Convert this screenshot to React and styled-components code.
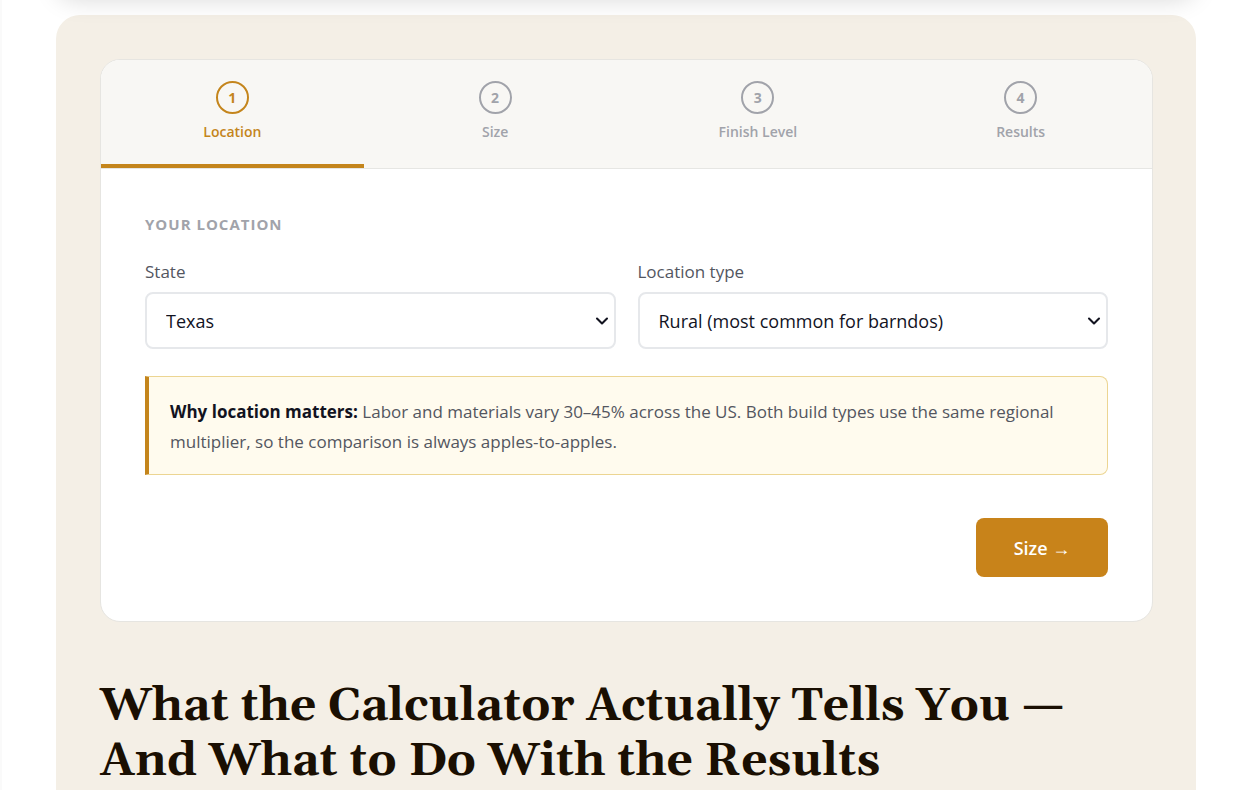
import styled, { createGlobalStyle } from "styled-components";
import { ChevronDown } from "lucide-react";
import { useState } from "react";

const GlobalStyle = createGlobalStyle`
  * {
    box-sizing: border-box;
  }

  body {
    margin: 0;
    font-family: "Segoe UI", "Open Sans", "Noto Sans", sans-serif;
    color: #12131f;
  }
`;

const Page = styled.main`
  height: 100vh;
  padding-left: 1px;
  overflow: hidden auto;
  scrollbar-width: none;
  border-left: 2px solid #fafafa;
  background-color: #fff;
`;

const Banner = styled.div`
  position: relative;
  max-width: 1140px;
  height: 40px;
  margin: -44px auto 19px;
  border-radius: 20px;
  background-color: #fff;
  box-shadow: 0 4px 24px rgba(0, 0, 0, 0.15);
`;

const Panel = styled.section`
  max-width: 1140px;
  margin: 0 auto;
  padding: 44px 43px 44px 44px;
  border-radius: 24px;
  background-color: #f4efe6;
`;

const Card = styled.div`
  overflow: hidden;
  border: 1px solid #e6e5e1;
  border-radius: 20px;
  background-color: #fff;
`;

const Steps = styled.nav`
  display: grid;
  grid-template-columns: repeat(4, 1fr);
  border-bottom: 1px solid #e6e6e3;
  background-color: #f8f7f4;
`;

const Step = styled.button`
  display: flex;
  flex-direction: column;
  align-items: center;
  gap: 8px;
  padding: 21px 8px 22px;
  border: none;
  border-bottom: 4px solid ${(props) => (props.$active ? "#c4851c" : "transparent")};
  background: none;
  color: ${(props) => (props.$active ? "#c4851c" : "#a1a3aa")};
  font-family: inherit;
  font-size: 14px;
  font-weight: 600;
  line-height: 20px;
  cursor: pointer;
`;

const StepNumber = styled.span`
  display: flex;
  align-items: center;
  justify-content: center;
  width: 33px;
  height: 33px;
  border: 2px solid currentColor;
  border-radius: 50%;
  font-weight: 700;
`;

const Form = styled.form`
  padding: 43px 44px 44px;
`;

const FormTitle = styled.h3`
  margin: 0 0 24px;
  color: #a1a3aa;
  font-size: 15px;
  font-weight: 700;
  line-height: 24px;
  letter-spacing: 1px;
  text-transform: uppercase;
`;

const Fields = styled.div`
  display: grid;
  grid-template-columns: 1fr 1fr;
  gap: 22px;
`;

const Field = styled.div`
  display: flex;
  flex-direction: column;
  gap: 8px;
`;

const Label = styled.label`
  color: #53565f;
  font-size: 17px;
  line-height: 24px;
`;

const SelectBox = styled.div`
  display: grid;
  align-items: center;

  > * {
    grid-area: 1 / 1;
  }

  svg {
    justify-self: end;
    margin-right: 4px;
    pointer-events: none;
  }
`;

const Select = styled.select`
  appearance: none;
  width: 100%;
  height: 57px;
  padding: 0 40px 0 19px;
  border: 2px solid #e6e8eb;
  border-radius: 8px;
  background-color: #fff;
  color: #12131f;
  font-family: inherit;
  font-size: 18px;
`;

const Notice = styled.p`
  margin: 27px 0 43px;
  padding: 20px 21px 17px;
  border: 1px solid #ecd592;
  border-left: 4px solid #c4851c;
  border-radius: 0 8px 8px 0;
  background-color: #fffbee;
  color: #53565f;
  font-size: 17px;
  line-height: 30px;

  strong {
    color: #12131f;
  }
`;

const Actions = styled.div`
  display: flex;
  justify-content: flex-end;
`;

const NextBtn = styled.button`
  min-width: 132px;
  height: 59px;
  border: none;
  border-radius: 8px;
  background-color: #c8831a;
  color: #fff;
  font-family: inherit;
  font-size: 18px;
  font-weight: 600;
  cursor: pointer;
`;

const Heading = styled.h2`
  margin: 57px 0 0;
  color: #1a0f02;
  font-family: Georgia, Gelasio, "Liberation Serif", serif;
  font-size: 46px;
  font-weight: 700;
  line-height: 55px;
`;

const steps = ["Location", "Size", "Finish Level", "Results"];

const App = () => {
  const [active, setActive] = useState(0);
  const [state, setState] = useState("Texas");

  return (
    <>
      <GlobalStyle />
      <Page>
        <Banner />
        <Panel>
          <Card>
            <Steps>
              {steps.map((step, index) => (
                <Step
                  key={step}
                  type="button"
                  $active={index === active}
                  onClick={() => setActive(index)}
                >
                  <StepNumber>{index + 1}</StepNumber>
                  {step}
                </Step>
              ))}
            </Steps>
            <Form onSubmit={(e) => e.preventDefault()}>
              <FormTitle>Your location</FormTitle>
              <Fields>
                <Field>
                  <Label htmlFor="state">State</Label>
                  <SelectBox>
                    <Select
                      id="state"
                      value={state}
                      onChange={(e) => setState(e.target.value)}
                    >
                      <option>Texas</option>
                    </Select>
                    <ChevronDown size={20} strokeWidth={2.5} />
                  </SelectBox>
                </Field>
                <Field>
                  <Label htmlFor="location-type">Location type</Label>
                  <SelectBox>
                    <Select id="location-type">
                      <option>Rural (most common for barndos)</option>
                    </Select>
                    <ChevronDown size={20} strokeWidth={2.5} />
                  </SelectBox>
                </Field>
              </Fields>
              <Notice>
                <strong>Why location matters:</strong> Labor and materials vary
                30–45% across the US. Both build types use the same regional
                multiplier, so the comparison is always apples-to-apples.
              </Notice>
              <Actions>
                <NextBtn type="button" onClick={() => setActive(1)}>
                  Size →
                </NextBtn>
              </Actions>
            </Form>
          </Card>
          <Heading>
            What the Calculator Actually Tells You — And What to Do With the
            Results
          </Heading>
        </Panel>
      </Page>
    </>
  );
};

export default App;
